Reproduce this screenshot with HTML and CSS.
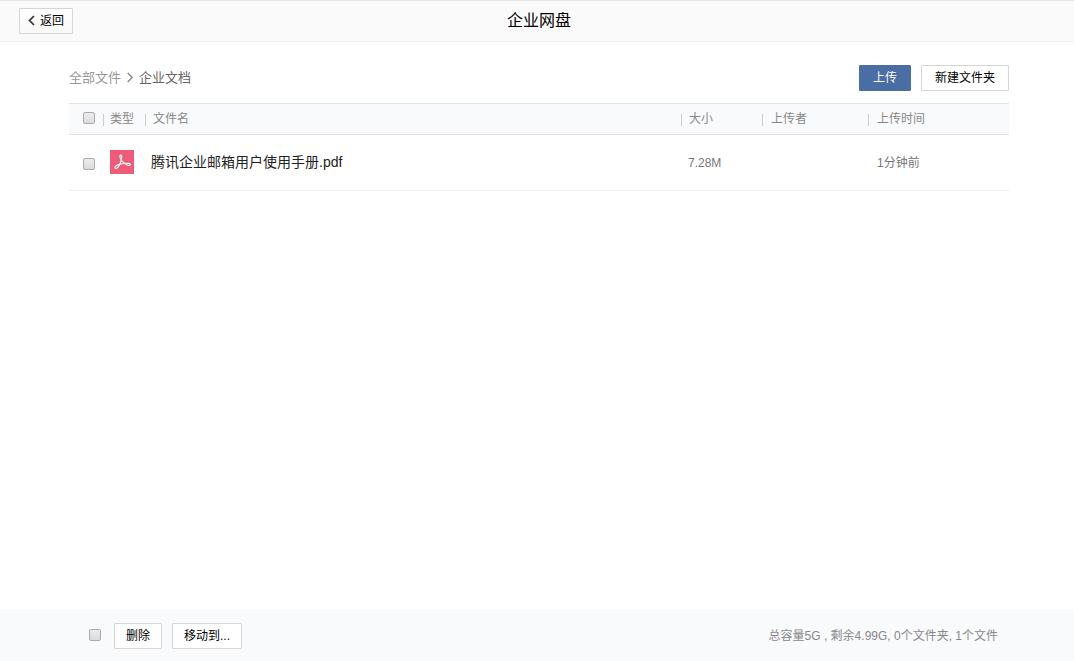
FILE: index.html
```html
<!DOCTYPE html>
<html lang="zh-CN">
<head>
<meta charset="utf-8">
<title>企业网盘</title>
<link rel="stylesheet" href="styles.css">
</head>
<body>
<header class="topbar">
  <button type="button" class="btn btn-back">
    <svg class="back-arrow" width="8" height="12" viewBox="0 0 8 12" fill="none" stroke="#333" stroke-width="1.700" aria-hidden="true"><path d="M6 1 1.500 5.500 6 10"/></svg>返回
  </button>
  <h1 class="title">企业网盘</h1>
</header>
<main class="content">
  <div class="toolbar">
    <nav class="crumbs" aria-label="路径">
      <a class="crumb" href="#">全部文件</a>
      <svg width="6" height="12" viewBox="0 0 6 12" fill="none" stroke="#8c8c8c" stroke-width="1.500" aria-hidden="true"><path d="M.7 1l4.500 4.500-4.500 4.500"/></svg>
      <span class="crumb-current">企业文档</span>
    </nav>
    <div class="actions">
      <button type="button" class="btn btn-primary">上传</button>
      <button type="button" class="btn btn-folder">新建文件夹</button>
    </div>
  </div>
  <table class="files">
    <colgroup><col class="col-check"><col class="col-type"><col><col class="col-size"><col class="col-user"><col class="col-time"></colgroup>
    <thead>
      <tr>
        <th class="check-cell"><input type="checkbox" class="check" aria-label="全选"></th>
        <th class="head">类型</th>
        <th class="head head-name">文件名</th>
        <th class="head head-name">大小</th>
        <th class="head head-wide">上传者</th>
        <th class="head head-wide">上传时间</th>
      </tr>
    </thead>
    <tbody>
      <tr>
        <td class="check-cell"><input type="checkbox" class="check" aria-label="选择 腾讯企业邮箱用户使用手册.pdf"></td>
        <td class="type-cell"><svg class="pdf" width="24" height="24" viewBox="0 0 24 24" role="img" aria-label="PDF"><rect width="24" height="24" fill="#ed5c78"/><path d="M11.200 10C9.700 7.400 9.300 5 10.700 5c1.500 0 1.200 2.500.5 5-.8 3.400-2.300 6.700-4.100 8-1.500 1-2.700.2-1.900-1.200 1-1.700 5-2.900 8.600-3.300 3.500-.4 6.500-.2 6.500 1.100 0 1.400-2.600 1-4.700-.5-1.800-1.200-3.400-2.400-4.400-4.100z" fill="none" stroke="#fff" stroke-width="1.100" stroke-linejoin="round"/></svg></td>
        <td class="name-cell"><a class="file-name" href="#">腾讯企业邮箱用户使用手册.pdf</a></td>
        <td class="size-cell">7.28M</td>
        <td></td>
        <td class="time-cell">1分钟前</td>
      </tr>
    </tbody>
  </table>
</main>
<footer class="bottombar">
  <div class="batch">
    <input type="checkbox" class="check" aria-label="全选文件">
    <button type="button" class="btn btn-delete">删除</button>
    <button type="button" class="btn btn-move">移动到...</button>
  </div>
  <p class="quota">总容量5G , 剩余4.99G, 0个文件夹, 1个文件</p>
</footer>
</body>
</html>
```

FILE: styles.css
```css
* {
  box-sizing: border-box;
}

body {
  display: flex;
  flex-direction: column;
  min-height: 100vh;
  margin: 0;
  background: #fff;
  color: #000;
  font: 12px/18px "Liberation Sans", "Noto Sans CJK SC", sans-serif;
}

.topbar {
  display: grid;
  grid-template-columns: 50px 1fr 50px;
  align-items: center;
  height: 42px;
  padding: 0 15px 0 19px;
  background: #fafafa;
  border-top: 1px solid #e6e6e6;
  border-bottom: 1px solid #eee;
}

.title {
  margin: 0;
  font-size: 16px;
  font-weight: 400;
  line-height: 24px;
  text-align: center;
}

.btn {
  height: 26px;
  padding: 0;
  border: 1px solid #d6d6d6;
  border-radius: 1px;
  background: #fff;
  color: #000;
  font: inherit;
  white-space: nowrap;
}

.btn-back {
  display: flex;
  align-items: center;
  gap: 4px;
  width: 54px;
  padding-left: 8px;
  background: linear-gradient(#fff, #f8f8f8);
}

.btn-primary {
  width: 52px;
  border-color: #4a6da4;
  background: #4a6da4;
  color: #fff;
}

.btn-folder {
  width: 88px;
}

.btn-delete {
  width: 48px;
}

.btn-move {
  width: 70px;
}

.content {
  flex: 1;
  padding: 23px 65px 0 69px;
}

.toolbar {
  display: flex;
  justify-content: space-between;
  align-items: center;
  height: 26px;
  margin-bottom: 12px;
}

.crumbs {
  display: flex;
  align-items: center;
  gap: 6px;
  font-size: 13px;
}

.crumb {
  color: #999;
  text-decoration: none;
}

.crumb-current {
  color: #666;
}

.actions {
  display: flex;
  gap: 10px;
}

.files {
  width: 100%;
  table-layout: fixed;
  border-collapse: separate;
  border-spacing: 0;
}

.col-check {
  width: 34px;
}

.col-type {
  width: 42px;
}

.col-size {
  width: 81px;
}

.col-user {
  width: 106px;
}

.col-time {
  width: 141px;
}

.files th {
  height: 32px;
  padding: 0;
  background: #f9fafc;
  border-top: 1px solid #e1e3e6;
  border-bottom: 1px solid #e1e3e6;
  color: #888;
  font-weight: 400;
  text-align: left;
}

.head::before {
  content: "";
  display: inline-block;
  width: 1px;
  height: 12px;
  margin-right: 6px;
  background: #ccc;
  vertical-align: -3px;
}

.head-name::before {
  margin-right: 7px;
}

.head-wide::before {
  margin-right: 8px;
}

.files td {
  height: 56px;
  padding: 0;
  border-bottom: 1px solid #eee;
  color: #777;
}

.files .check-cell {
  padding-left: 14px;
}

.files th.check-cell {
  padding-bottom: 2px;
}

.files td.check-cell {
  padding-top: 3px;
}

.check {
  display: block;
  appearance: none;
  width: 12px;
  height: 12px;
  margin: 0;
  border: 1px solid #aaa;
  border-radius: 2px;
  background: linear-gradient(#ececec, #dcdcdc);
}

.files .type-cell {
  padding: 0 0 2px 7px;
}

.pdf {
  display: block;
}

.files .name-cell {
  padding-left: 6px;
}

.file-name {
  color: #222;
  font-size: 14px;
  text-decoration: none;
}

.files .size-cell {
  padding-left: 7px;
}

.files .time-cell {
  padding-left: 9px;
}

.bottombar {
  display: flex;
  justify-content: space-between;
  align-items: center;
  height: 52px;
  padding: 2px 76px 0 89px;
  background: #f9fafc;
}

.batch {
  display: flex;
  align-items: center;
  gap: 10px;
}

.batch .check {
  margin: 0 3px 2px 0;
}

.quota {
  margin: 0;
  color: #888;
}
```
